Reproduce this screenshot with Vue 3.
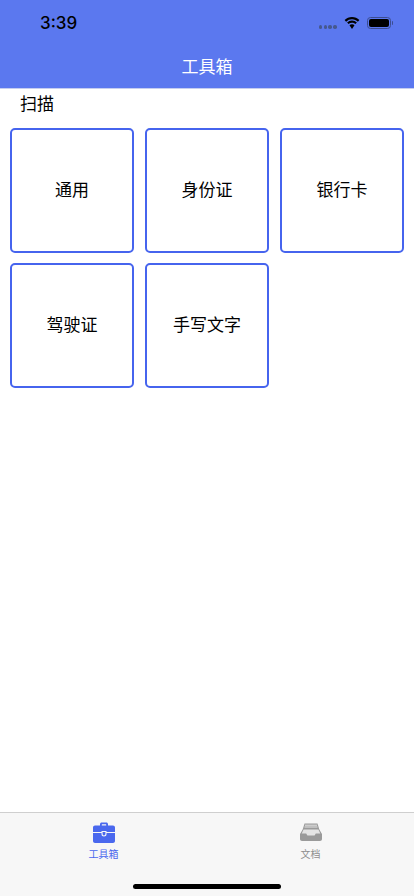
<script setup>
const items = ['通用', '身份证', '银行卡', '驾驶证', '手写文字']
</script>

<template>
  <div class="page">
    <header class="head">
      <div class="status">
        <span class="time">3:39</span>
        <div class="indicators">
          <div class="dots"><i></i><i></i><i></i><i></i></div>
          <svg class="wifi" width="16" height="12" viewBox="0 0 16 12">
            <path d="M8 2.300c2.300 0 4.400.9 5.900 2.400l1.500-1.600A10.400 10.400 0 0 0 8 0 10.400 10.400 0 0 0 .6 3.100l1.500 1.600A8.300 8.300 0 0 1 8 2.300z" fill="#000"/>
            <path d="M8 5.800c1.300 0 2.500.5 3.400 1.300l1.500-1.600A7 7 0 0 0 8 3.500a7 7 0 0 0-4.900 2l1.500 1.600A5 5 0 0 1 8 5.800z" fill="#000"/>
            <path d="M8 7.200c-1 0-1.900.4-2.500 1L8 12l2.500-3.800A3.600 3.600 0 0 0 8 7.200z" fill="#000"/>
          </svg>
          <div class="battery"><div class="level"></div></div>
          <div class="nub"></div>
        </div>
      </div>
      <div class="title">工具箱</div>
    </header>

    <main class="content">
      <div class="section">扫描</div>
      <div class="grid">
        <div v-for="item in items" :key="item" class="card">{{ item }}</div>
      </div>
    </main>

    <footer class="tabbar">
      <div class="tabs">
        <div class="tab active">
          <svg width="22" height="21" viewBox="0 0 22 21">
            <path d="M7 4.500V2.200C7 1.200 7.800.5 8.700.5h4.600c.9 0 1.700.7 1.700 1.700v2.300h-1.800V2.500a.3.300 0 0 0-.3-.3H9.100a.3.300 0 0 0-.3.3v2z" fill="#4a68ee"/>
            <path d="M2 3.500h18c1.100 0 2 .9 2 2V10h-8.500V9h-5v1H0V5.500c0-1.100.9-2 2-2z" fill="#4a68ee"/>
            <path d="M0 11h8.500v1.200c0 1.300 1.100 2.300 2.500 2.300s2.500-1 2.500-2.300V11H22v8c0 1.100-.9 2-2 2H2c-1.100 0-2-.9-2-2z" fill="#4a68ee"/>
            <path d="M9.600 10h2.800v2.100c0 .7-.6 1.300-1.400 1.300s-1.400-.6-1.400-1.300z" fill="#4a68ee"/>
          </svg>
          <span>工具箱</span>
        </div>
        <div class="tab">
          <svg width="22" height="21" viewBox="0 0 22 21">
            <path d="M4.500 1.500h13l1.800 6h-16.600z" fill="#9a9a9a"/>
            <path d="M5 3.200h12M4.500 5h13" stroke="#eee" stroke-width=".9"/>
            <path d="M3 7h16l3 5v5c0 1.100-.9 2-2 2H2c-1.100 0-2-.9-2-2v-5z" fill="#9a9a9a"/>
            <path d="M3.600 7.600h14.800l1.900 3.900h-4.500l-1.200 2H7.400l-1.200-2H1.700z" fill="#e4e4e4"/>
          </svg>
          <span>文档</span>
        </div>
      </div>
      <div class="home"></div>
    </footer>
  </div>
</template>

<style scoped>
.page {
  width: 414px;
  height: 896px;
  display: flex;
  flex-direction: column;
  background: #fff;
  font-family: "Noto Sans CJK SC", "Liberation Sans", sans-serif;
  color: #000;
  overflow: hidden;
}
.head {
  height: 89px;
  flex: none;
  background: #5b78ef;
  border-bottom: 1px solid #c5cdf0;
  box-sizing: border-box;
}
.status {
  height: 46px;
  display: flex;
  align-items: center;
  justify-content: space-between;
  padding: 0 21px 0 40px;
}
.time {
  font-family: Inter, "Liberation Sans", sans-serif;
  font-size: 17px;
  font-weight: 500;
}
.indicators {
  display: flex;
  align-items: center;
  margin-top: -1px;
}
.dots {
  display: flex;
  gap: 1.200px;
  margin-right: 7px;
  margin-top: 9px;
}
.dots i {
  width: 3.500px;
  height: 3.500px;
  border-radius: 50%;
  background: #46588f;
}
.battery {
  width: 24px;
  height: 12px;
  margin-left: 7px;
  box-sizing: border-box;
  border: 1px solid #3c4d91;
  border-radius: 3.500px;
  padding: 1px;
}
.level {
  width: 100%;
  height: 100%;
  background: #000;
  border-radius: 2px;
}
.nub {
  width: 1.500px;
  height: 4px;
  margin-left: 1px;
  background: #3c4d91;
  border-radius: 0 1px 1px 0;
}
.title {
  height: 39px;
  display: flex;
  align-items: center;
  justify-content: center;
  color: #fff;
  font-size: 17px;
  font-weight: 400;
}
.content {
  flex: 1;
  padding: 0 10px;
}
.section {
  padding: 0 0 3px 10px;
  height: 29px;
  box-sizing: border-box;
  display: flex;
  align-items: center;
  font-size: 17px;
}
.grid {
  margin-top: 10px;
  display: grid;
  grid-template-columns: repeat(3, 124px);
  grid-auto-rows: 125px;
  column-gap: 11px;
  row-gap: 10px;
}
.card {
  box-sizing: border-box;
  border: 2px solid #4664ee;
  border-radius: 5px;
  padding-bottom: 5px;
  display: flex;
  align-items: center;
  justify-content: center;
  font-size: 17px;
}
.tabbar {
  height: 84px;
  flex: none;
  box-sizing: border-box;
  background: #f7f7f7;
  border-top: 1px solid #cfcfcf;
  display: flex;
  flex-direction: column;
}
.tabs {
  display: grid;
  grid-template-columns: 1fr 1fr;
  height: 49px;
}
.tab {
  display: flex;
  flex-direction: column;
  align-items: center;
  padding-top: 9px;
  color: #8e8e8e;
  font-size: 10px;
  line-height: 14px;
  gap: 4px;
}
.tab svg {
  display: block;
}
.tab.active {
  color: #4a68ee;
}
.home {
  width: 148px;
  height: 5px;
  margin: 22px auto 0;
  background: #000;
  border-radius: 3px;
}
</style>
